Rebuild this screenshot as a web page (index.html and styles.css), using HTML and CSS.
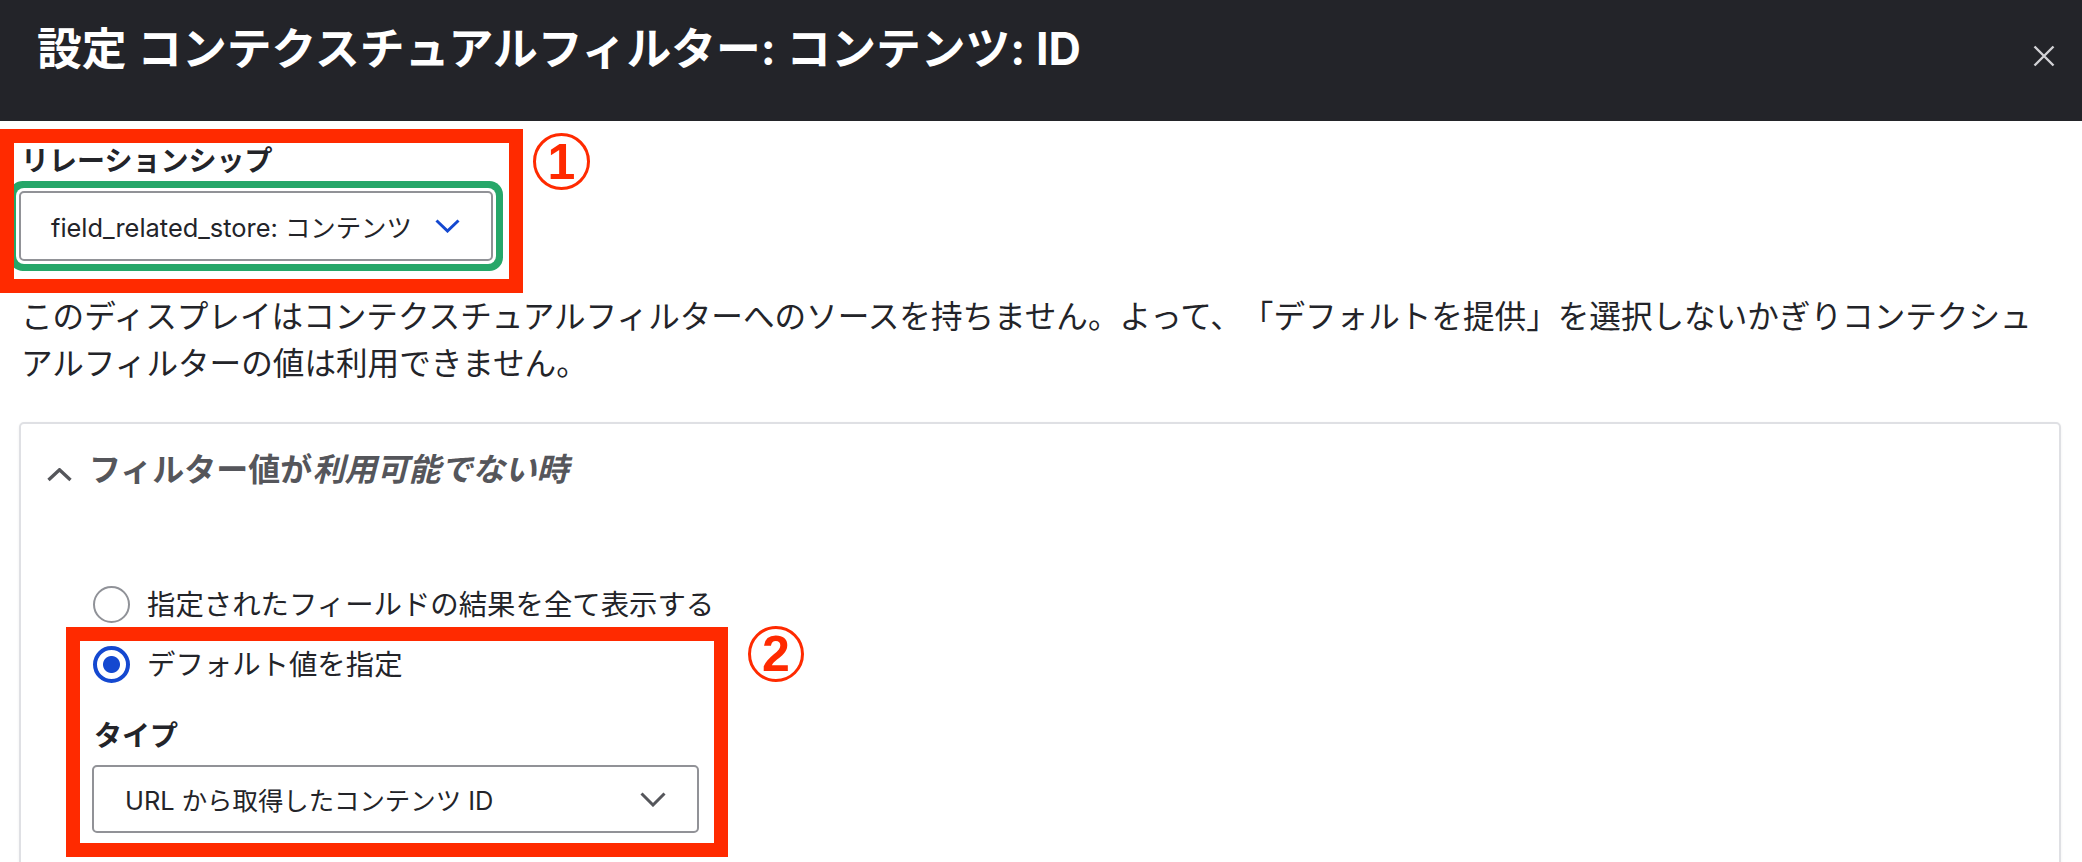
FILE: index.html
```html
<!DOCTYPE html>
<html lang="ja">
<head>
<meta charset="utf-8">
<title>設定 コンテクスチュアルフィルター</title>
<link rel="stylesheet" href="styles.css">
</head>
<body>
<div class="dialog">
  <header class="titlebar">
    <h1 class="title">設定 コンテクスチュアルフィルター: コンテンツ: ID</h1>
    <button class="close" type="button" aria-label="閉じる">
      <svg width="22" height="22" viewBox="0 0 22 22"><path d="M1.5 1.5L20.5 20.5M20.5 1.5L1.5 20.5" stroke="#d2d2d6" stroke-width="2.4" fill="none"/></svg>
    </button>
  </header>

  <div class="content">
    <div class="annot-row annot-row--rel">
      <div class="mark-box mark-box--rel">
        <div class="field-label">リレーションシップ</div>
        <div class="select select--focus">
          <span class="select-text">field_related_store: コンテンツ</span>
          <svg class="chev" width="25" height="14" viewBox="0 0 25 14"><polyline points="1.5,1.5 12.5,12 23.5,1.5" fill="none" stroke="#1448d0" stroke-width="3"/></svg>
        </div>
      </div>
      <span class="badge badge--1">1</span>
    </div>

    <p class="desc">このディスプレイはコンテクスチュアルフィルターへのソースを持ちません。よって、「デフォルトを提供」を選択しないかぎりコンテクシュアルフィルターの値は利用できません。</p>

    <div class="details">
      <div class="summary">
        <svg class="summary-chev" width="25" height="14" viewBox="0 0 25 14"><polyline points="1.5,12 12.5,1.8 23.5,12" fill="none" stroke="#55565b" stroke-width="3.4"/></svg>
        <span class="summary-text">フィルター値が<em>利用可能でない時</em></span>
      </div>
      <div class="details-body">
        <div class="radio">
          <span class="radio-mark"></span>
          <span class="radio-label">指定されたフィールドの結果を全て表示する</span>
        </div>
        <div class="annot-row annot-row--type">
          <div class="mark-box mark-box--type">
            <div class="radio">
              <span class="radio-mark radio-mark--checked"></span>
              <span class="radio-label">デフォルト値を指定</span>
            </div>
            <div class="field-label field-label--type">タイプ</div>
            <div class="select select--type">
              <span class="select-text">URL から取得したコンテンツ ID</span>
              <svg class="chev" width="26" height="15" viewBox="0 0 26 15"><polyline points="1.5,1.5 13,13 24.5,1.5" fill="none" stroke="#55565b" stroke-width="3"/></svg>
            </div>
          </div>
          <span class="badge badge--2">2</span>
        </div>
      </div>
    </div>
  </div>
</div>
</body>
</html>
```

FILE: styles.css
```css
* {
  box-sizing: border-box;
}

html,
body {
  margin: 0;
  padding: 0;
  background: #ffffff;
}

body {
  width: 2082px;
  height: 862px;
  overflow: hidden;
  font-family: Inter, "Noto Sans CJK JP", sans-serif;
  color: #232429;
  text-spacing-trim: space-all;
}

/* Title bar */
.titlebar {
  height: 121px;
  background: #232429;
  display: flex;
  align-items: flex-start;
  padding: 23px 27px 0 37px;
}

.title {
  flex: 1;
  margin: 0;
  font-size: 44.8px;
  line-height: 52px;
  font-weight: 700;
  color: #ffffff;
  white-space: nowrap;
}

.close {
  display: block;
  width: 22px;
  height: 22px;
  margin-top: 22px;
  padding: 0;
  border: 0;
  background: none;
}

.close svg {
  display: block;
}

/* Content */
.content {
  padding: 8px 21px 0 19px;
}

.annot-row {
  display: flex;
  align-items: flex-start;
}

.annot-row--rel {
  margin-left: -19px;
}

.mark-box {
  border: 14px solid #ff2a00;
  overflow: hidden;
  background: #ffffff;
}

.mark-box--rel {
  width: 523px;
  padding: 0 0 18px 5px;
}

.field-label {
  font-size: 28px;
  line-height: 36px;
  font-weight: 700;
  color: #232429;
  padding-left: 2px;
}

.select {
  display: flex;
  align-items: center;
  justify-content: space-between;
  border: 2px solid #919297;
  border-radius: 5px;
  background: #ffffff;
  font-size: 25.4px;
  color: #232429;
}

.select--focus {
  width: 474px;
  height: 70px;
  margin-top: 12px;
  padding: 0 31px 0 30px;
  box-shadow: 0 0 0 3px #ffffff, 0 0 0 10px #26a769;
}

.select-text {
  white-space: nowrap;
}

.chev {
  display: block;
  flex: none;
}

.badge {
  flex: none;
  display: flex;
  align-items: center;
  justify-content: center;
  width: 57px;
  height: 57px;
  border: 3px solid #ff2a00;
  border-radius: 50%;
  color: #ff2a00;
  font-family: "Liberation Sans", Arial, sans-serif;
  font-weight: 700;
  font-size: 50px;
  line-height: 1;
}

.badge--1 {
  margin: 4px 0 0 10px;
}

.badge--2 {
  width: 56px;
  height: 56px;
  margin: -1px 0 0 20px;
}

/* Description */
.desc {
  margin: 0 0 35px;
  padding: 0 12px 0 2px;
  font-size: 31.6px;
  line-height: 47px;
  color: #232429;
}

/* Details */
.details {
  border: 2px solid #dfe0e4;
  border-radius: 5px;
  min-height: 520px;
  box-shadow: 0 1px 3px rgba(0, 0, 0, 0.06);
}

.summary {
  display: flex;
  align-items: flex-start;
  padding: 22px 0 0 26px;
  color: #55565b;
}

.summary-chev {
  display: block;
  flex: none;
  margin-top: 22px;
}

.summary-text {
  margin-left: 17px;
  font-size: 32px;
  line-height: 48px;
  font-weight: 700;
}

.summary-text em {
  font-style: italic;
}

.details-body {
  padding: 92px 0 0 72px;
}

.radio {
  display: flex;
  align-items: center;
  gap: 17px;
  font-size: 28.4px;
  line-height: 37px;
  color: #232429;
}

.radio-mark {
  flex: none;
  width: 37px;
  height: 37px;
  border-radius: 50%;
  border: 2px solid #909298;
  background: #ffffff;
}

.radio-mark--checked {
  border: 4px solid #1448d0;
  background: radial-gradient(circle, #1448d0 0 8px, #ffffff 9px);
}

.annot-row--type {
  margin-top: 4px;
  margin-left: -27px;
}

.mark-box--type {
  width: 662px;
  padding: 5px 0 10px 13px;
}

.field-label--type {
  margin-top: 35px;
  padding-left: 1px;
}

.select--type {
  width: 607px;
  height: 68px;
  margin-top: 11px;
  margin-left: -1px;
  padding: 0 31px 0 31px;
}
```
